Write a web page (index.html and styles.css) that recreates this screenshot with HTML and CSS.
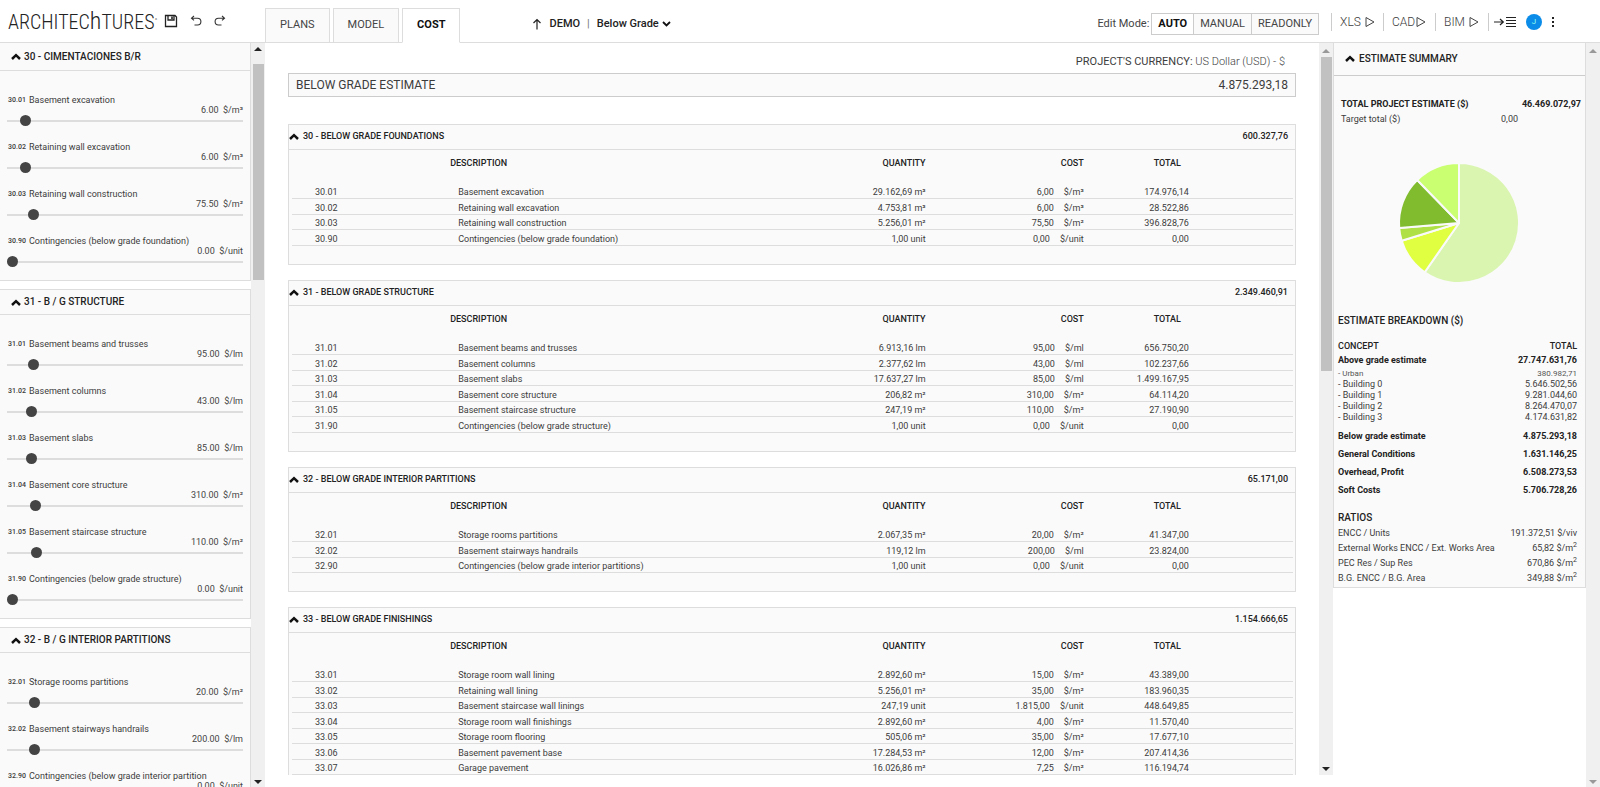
FILE: index.html
```html
<!DOCTYPE html>
<html lang="en">
<head>
<meta charset="utf-8">
<title>Architechtures - Cost</title>
<link rel="stylesheet" href="styles.css">
</head>
<body>
<svg class="defs" aria-hidden="true">
  <symbol id="caret" viewBox="0 0 10 7"><path d="M1 6 5 2.2 9 6" fill="none" stroke="#111" stroke-width="2.5"/></symbol>
  <symbol id="play" viewBox="0 0 10 12"><path d="M1 1.5 9 6 1 10.5Z" fill="none" stroke="#444" stroke-width="1"/></symbol>
  <symbol id="up" viewBox="0 0 8 4"><path d="M0 4 4 0 8 4Z"/></symbol>
  <symbol id="down" viewBox="0 0 8 4"><path d="M0 0 4 4 8 0Z"/></symbol>
</svg>
<header class="topbar">
  <div class="brand">
    <a class="logo" href="#">ARCHITEC<span class="logo-h">h</span>TURES<span class="logo-mark">°</span></a>
    <button class="icon-btn" aria-label="Save"><svg width="14" height="14" viewBox="0 0 14 14" fill="none" stroke="#222" stroke-width="1.3"><path d="M1.5 1.5H11L12.5 3V12.5H1.5Z"/><path d="M4 1.5V6H10V1.5"/><path d="M8 2.5V5" stroke-width="1.6"/></svg></button>
    <button class="icon-btn" aria-label="Undo"><svg width="12" height="12" viewBox="0 0 12 12" fill="none" stroke="#333" stroke-width="1.1"><path d="M4 1 1.5 3.2 4 5.4M1.5 3.2H7.5A3.3 3.3 0 0 1 7.5 10H4.5"/></svg></button>
    <button class="icon-btn" aria-label="Redo"><svg width="12" height="12" viewBox="0 0 12 12" fill="none" stroke="#333" stroke-width="1.1"><path d="M8 1 10.5 3.2 8 5.4M10.5 3.2H4.5A3.3 3.3 0 0 0 4.5 10H7.5"/></svg></button>
  </div>
  <nav class="tabs">
    <a class="tab" href="#">PLANS</a>
    <a class="tab" href="#">MODEL</a>
    <a class="tab tab-active" href="#" aria-current="page">COST</a>
  </nav>
  <div class="crumbs">
    <svg width="10" height="12" viewBox="0 0 10 12" fill="none" stroke="#222" stroke-width="1.2" aria-hidden="true"><path d="M5 11.5V1.5M1.5 5 5 1.5 8.500 5"/></svg>
    <a class="crumb" href="#">DEMO</a>
    <span class="bar">|</span>
    <select class="crumb-select" aria-label="Part"><option>Below Grade</option></select>
    <svg width="9" height="6" viewBox="0 0 9 6" fill="none" stroke="#111" stroke-width="1.8" aria-hidden="true"><path d="M1 1 4.500 4.500 8 1"/></svg>
  </div>
  <div class="mode">
    <span class="mode-label">Edit Mode:</span>
    <div class="mode-group">
      <button class="mode-btn mode-on">AUTO</button>
      <button class="mode-btn">MANUAL</button>
      <button class="mode-btn">READONLY</button>
    </div>
  </div>
  <div class="exports">
    <button class="export">XLS <svg width="10" height="12"><use href="#play"/></svg></button>
    <button class="export">CAD<svg width="10" height="12"><use href="#play"/></svg></button>
    <button class="export">BIM <svg width="10" height="12"><use href="#play"/></svg></button>
    <button class="export export-list" aria-label="Toggle summary"><svg width="22" height="12" viewBox="0 0 22 12" fill="none" stroke="#222" stroke-width="1.2"><path d="M0 6H9M6 3 9.300 6 6 9M12 1.500H22M12 4.500H22M12 7.500H22M12 10.500H22"/></svg></button>
    <button class="avatar">J</button>
    <button class="icon-btn" aria-label="More"><svg width="4" height="12" viewBox="0 0 4 12" fill="#222"><rect x="1" y="1" width="2" height="2"/><rect x="1" y="5" width="2" height="2"/><rect x="1" y="9" width="2" height="2"/></svg></button>
  </div>
</header>
<div class="workspace">
  <aside class="sidebar">
    <div class="side-list">
      <section class="side-card side-first">
        <button class="side-title"><svg width="10" height="7"><use href="#caret"/></svg>30 - CIMENTACIONES B/R</button>
        <div class="side-body">
          <div class="param"><label for="p1"><b>30.01</b>Basement excavation</label><output>6.00 &nbsp;$/m³</output><input id="p1" type="range" max="1000" value="58"></div>
          <div class="param"><label for="p2"><b>30.02</b>Retaining wall excavation</label><output>6.00 &nbsp;$/m³</output><input id="p2" type="range" max="1000" value="58"></div>
          <div class="param"><label for="p3"><b>30.03</b>Retaining wall construction</label><output>75.50 &nbsp;$/m²</output><input id="p3" type="range" max="1000" value="92"></div>
          <div class="param"><label for="p4"><b>30.90</b>Contingencies (below grade foundation)</label><output>0.00 &nbsp;$/unit</output><input id="p4" type="range" max="1000" value="0"></div>
        </div>
      </section>
      <section class="side-card">
        <button class="side-title"><svg width="10" height="7"><use href="#caret"/></svg>31 - B / G STRUCTURE</button>
        <div class="side-body">
          <div class="param"><label for="p5"><b>31.01</b>Basement beams and trusses</label><output>95.00 &nbsp;$/lm</output><input id="p5" type="range" max="1000" value="92"></div>
          <div class="param"><label for="p6"><b>31.02</b>Basement columns</label><output>43.00 &nbsp;$/lm</output><input id="p6" type="range" max="1000" value="83"></div>
          <div class="param"><label for="p7"><b>31.03</b>Basement slabs</label><output>85.00 &nbsp;$/lm</output><input id="p7" type="range" max="1000" value="83"></div>
          <div class="param"><label for="p8"><b>31.04</b>Basement core structure</label><output>310.00 &nbsp;$/m²</output><input id="p8" type="range" max="1000" value="101"></div>
          <div class="param"><label for="p9"><b>31.05</b>Basement staircase structure</label><output>110.00 &nbsp;$/m²</output><input id="p9" type="range" max="1000" value="107"></div>
          <div class="param"><label for="p10"><b>31.90</b>Contingencies (below grade structure)</label><output>0.00 &nbsp;$/unit</output><input id="p10" type="range" max="1000" value="0"></div>
        </div>
      </section>
      <section class="side-card">
        <button class="side-title"><svg width="10" height="7"><use href="#caret"/></svg>32 - B / G INTERIOR PARTITIONS</button>
        <div class="side-body">
          <div class="param"><label for="p11"><b>32.01</b>Storage rooms partitions</label><output>20.00 &nbsp;$/m²</output><input id="p11" type="range" max="1000" value="98"></div>
          <div class="param"><label for="p12"><b>32.02</b>Basement stairways handrails</label><output>200.00 &nbsp;$/lm</output><input id="p12" type="range" max="1000" value="98"></div>
          <div class="param"><label for="p13"><b>32.90</b>Contingencies (below grade interior partition</label><output>0.00 &nbsp;$/unit</output><input id="p13" type="range" max="1000" value="0"></div>
        </div>
      </section>
    </div>
    <div class="scroll scroll-side" aria-hidden="true"><svg width="8" height="4"><use href="#up"/></svg><div class="thumb"></div><svg class="end" width="8" height="4"><use href="#down"/></svg></div>
  </aside>
  <main class="main">
    <div class="estimate">
      <p class="currency"><span>PROJECT'S CURRENCY:</span> US Dollar (USD) - $</p>
      <h1 class="headline"><span>BELOW GRADE ESTIMATE</span><span>4.875.293,18</span></h1>
      <section class="card">
        <button class="card-title"><svg width="10" height="7"><use href="#caret"/></svg>30 - BELOW GRADE FOUNDATIONS<span class="sum">600.327,76</span></button>
        <table>
          <colgroup><col class="c-code"><col class="c-desc"><col class="c-qty"><col class="c-cost"><col class="c-total"><col></colgroup>
          <thead><tr><td></td><th>DESCRIPTION</th><th class="n">QUANTITY</th><th class="n">COST</th><th class="n">TOTAL</th><td></td></tr></thead>
          <tbody>
            <tr><td>30.01</td><td>Basement excavation</td><td>29.162,69 m³</td><td>6,00<i>$/m³</i></td><td>174.976,14</td><td></td></tr>
            <tr><td>30.02</td><td>Retaining wall excavation</td><td>4.753,81 m³</td><td>6,00<i>$/m³</i></td><td>28.522,86</td><td></td></tr>
            <tr><td>30.03</td><td>Retaining wall construction</td><td>5.256,01 m²</td><td>75,50<i>$/m²</i></td><td>396.828,76</td><td></td></tr>
            <tr><td>30.90</td><td>Contingencies (below grade foundation)</td><td>1,00 unit</td><td>0,00<i>$/unit</i></td><td>0,00</td><td></td></tr>
          </tbody>
        </table>
      </section>
      <section class="card">
        <button class="card-title"><svg width="10" height="7"><use href="#caret"/></svg>31 - BELOW GRADE STRUCTURE<span class="sum">2.349.460,91</span></button>
        <table>
          <colgroup><col class="c-code"><col class="c-desc"><col class="c-qty"><col class="c-cost"><col class="c-total"><col></colgroup>
          <thead><tr><td></td><th>DESCRIPTION</th><th class="n">QUANTITY</th><th class="n">COST</th><th class="n">TOTAL</th><td></td></tr></thead>
          <tbody>
            <tr><td>31.01</td><td>Basement beams and trusses</td><td>6.913,16 lm</td><td>95,00<i>$/ml</i></td><td>656.750,20</td><td></td></tr>
            <tr><td>31.02</td><td>Basement columns</td><td>2.377,62 lm</td><td>43,00<i>$/ml</i></td><td>102.237,66</td><td></td></tr>
            <tr><td>31.03</td><td>Basement slabs</td><td>17.637,27 lm</td><td>85,00<i>$/ml</i></td><td>1.499.167,95</td><td></td></tr>
            <tr><td>31.04</td><td>Basement core structure</td><td>206,82 m²</td><td>310,00<i>$/m²</i></td><td>64.114,20</td><td></td></tr>
            <tr><td>31.05</td><td>Basement staircase structure</td><td>247,19 m²</td><td>110,00<i>$/m²</i></td><td>27.190,90</td><td></td></tr>
            <tr><td>31.90</td><td>Contingencies (below grade structure)</td><td>1,00 unit</td><td>0,00<i>$/unit</i></td><td>0,00</td><td></td></tr>
          </tbody>
        </table>
      </section>
      <section class="card">
        <button class="card-title"><svg width="10" height="7"><use href="#caret"/></svg>32 - BELOW GRADE INTERIOR PARTITIONS<span class="sum">65.171,00</span></button>
        <table>
          <colgroup><col class="c-code"><col class="c-desc"><col class="c-qty"><col class="c-cost"><col class="c-total"><col></colgroup>
          <thead><tr><td></td><th>DESCRIPTION</th><th class="n">QUANTITY</th><th class="n">COST</th><th class="n">TOTAL</th><td></td></tr></thead>
          <tbody>
            <tr><td>32.01</td><td>Storage rooms partitions</td><td>2.067,35 m²</td><td>20,00<i>$/m²</i></td><td>41.347,00</td><td></td></tr>
            <tr><td>32.02</td><td>Basement stairways handrails</td><td>119,12 lm</td><td>200,00<i>$/ml</i></td><td>23.824,00</td><td></td></tr>
            <tr><td>32.90</td><td>Contingencies (below grade interior partitions)</td><td>1,00 unit</td><td>0,00<i>$/unit</i></td><td>0,00</td><td></td></tr>
          </tbody>
        </table>
      </section>
      <section class="card">
        <button class="card-title"><svg width="10" height="7"><use href="#caret"/></svg>33 - BELOW GRADE FINISHINGS<span class="sum">1.154.666,65</span></button>
        <table>
          <colgroup><col class="c-code"><col class="c-desc"><col class="c-qty"><col class="c-cost"><col class="c-total"><col></colgroup>
          <thead><tr><td></td><th>DESCRIPTION</th><th class="n">QUANTITY</th><th class="n">COST</th><th class="n">TOTAL</th><td></td></tr></thead>
          <tbody>
            <tr><td>33.01</td><td>Storage room wall lining</td><td>2.892,60 m²</td><td>15,00<i>$/m²</i></td><td>43.389,00</td><td></td></tr>
            <tr><td>33.02</td><td>Retaining wall lining</td><td>5.256,01 m²</td><td>35,00<i>$/m²</i></td><td>183.960,35</td><td></td></tr>
            <tr><td>33.03</td><td>Basement staircase wall linings</td><td>247,19 unit</td><td>1.815,00<i>$/unit</i></td><td>448.649,85</td><td></td></tr>
            <tr><td>33.04</td><td>Storage room wall finishings</td><td>2.892,60 m²</td><td>4,00<i>$/m²</i></td><td>11.570,40</td><td></td></tr>
            <tr><td>33.05</td><td>Storage room flooring</td><td>505,06 m²</td><td>35,00<i>$/m²</i></td><td>17.677,10</td><td></td></tr>
            <tr><td>33.06</td><td>Basement pavement base</td><td>17.284,53 m²</td><td>12,00<i>$/m²</i></td><td>207.414,36</td><td></td></tr>
            <tr><td>33.07</td><td>Garage pavement</td><td>16.026,86 m²</td><td>7,25<i>$/m²</i></td><td>116.194,74</td><td></td></tr>
          </tbody>
        </table>
      </section>
    </div>
    <div class="scroll scroll-main" aria-hidden="true"><svg class="dim" width="8" height="4"><use href="#up"/></svg><div class="thumb"></div><svg class="end" width="8" height="4"><use href="#down"/></svg></div>
  </main>
  <aside class="right">
    <section class="summary">
      <button class="summary-title"><svg width="10" height="7"><use href="#caret"/></svg>ESTIMATE SUMMARY</button>
      <dl class="totals">
        <div class="strong"><dt>TOTAL PROJECT ESTIMATE ($)</dt><dd>46.469.072,97</dd></div>
        <div class="target"><dt>Target total ($)</dt><dd>0,00</dd></div>
      </dl>
      <svg class="pie" width="124" height="124" viewBox="-62 -62 124 124" stroke="#fafafa" stroke-width="2" stroke-linejoin="round" role="img" aria-label="Estimate shares">
        <path fill="#daf5b0" d="M0 0V-60A60 60 0 1 1 -34.300 49.200Z"/>
        <path fill="#dfff40" d="M0 0L-34.300 49.200A60 60 0 0 1 -57.300 17.800Z"/>
        <path fill="#afe045" d="M0 0L-57.300 17.800A60 60 0 0 1 -59.800 4.900Z"/>
        <path fill="#80bc2e" d="M0 0L-59.800 4.900A60 60 0 0 1 -41.800 -43Z"/>
        <path fill="#c9ff70" d="M0 0L-41.800 -43A60 60 0 0 1 0 -60Z"/>
      </svg>
      <h2 class="sub">ESTIMATE BREAKDOWN ($)</h2>
      <dl class="breakdown">
        <div class="strong concept"><dt>CONCEPT</dt><dd>TOTAL</dd></div>
        <div class="strong above"><dt>Above grade estimate</dt><dd>27.747.631,76</dd></div>
        <div class="urban"><dt>- Urban</dt><dd>380.982,71</dd></div>
        <div class="item"><dt>- Building 0</dt><dd>5.646.502,56</dd></div>
        <div class="item"><dt>- Building 1</dt><dd>9.281.044,60</dd></div>
        <div class="item"><dt>- Building 2</dt><dd>8.264.470,07</dd></div>
        <div class="item"><dt>- Building 3</dt><dd>4.174.631,82</dd></div>
        <div class="strong group"><dt>Below grade estimate</dt><dd>4.875.293,18</dd></div>
        <div class="strong group"><dt>General Conditions</dt><dd>1.631.146,25</dd></div>
        <div class="strong group"><dt>Overhead, Profit</dt><dd>6.508.273,53</dd></div>
        <div class="strong group"><dt>Soft Costs</dt><dd>5.706.728,26</dd></div>
      </dl>
      <h2 class="sub sub-ratios">RATIOS</h2>
      <dl class="ratios">
        <div><dt>ENCC / Units</dt><dd>191.372,51 $/viv</dd></div>
        <div><dt>External Works ENCC / Ext. Works Area</dt><dd>65,82 $/m<sup>2</sup></dd></div>
        <div><dt>PEC Res / Sup Res</dt><dd>670,86 $/m<sup>2</sup></dd></div>
        <div><dt>B.G. ENCC / B.G. Area</dt><dd>349,88 $/m<sup>2</sup></dd></div>
      </dl>
    </section>
    <div class="scroll scroll-right" aria-hidden="true"><svg class="dim" width="8" height="4"><use href="#up"/></svg><svg class="dim end" width="8" height="4"><use href="#down"/></svg></div>
  </aside>
</div>
</body>
</html>
```
FILE: styles.css
```css
* { box-sizing: border-box; }
body {
  margin: 0;
  height: 100vh;
  display: flex;
  flex-direction: column;
  overflow: hidden;
  background: #fff;
  color: #3c3c3c;
  font: 400 9px/12px Roboto, "Liberation Sans", sans-serif;
}
button, select { font: inherit; color: inherit; background: none; border: 0; padding: 0; margin: 0; text-align: left; }
a { color: inherit; text-decoration: none; }
h1, h2, p, dl, dd { margin: 0; }
svg { flex: none; display: block; }
.defs { position: absolute; width: 0; height: 0; }

/* top bar */
.topbar { flex: none; height: 43px; display: flex; border-bottom: 1px solid #ddd; }
.brand { width: 265px; flex: none; display: flex; align-items: center; padding-left: 8px; gap: 12px; }
.logo { width: 144px; white-space: nowrap; font: 300 20px/24px "Roboto Condensed", "Liberation Sans Narrow", Roboto, sans-serif; color: #222; }
.logo-h { font-size: 24px; }
.logo-mark { font-size: 8px; vertical-align: top; }
.icon-btn { display: flex; }
.tabs { display: flex; align-items: flex-end; gap: 3px; margin-bottom: -1px; }
.tab { height: 35px; padding: 0 14px; border: 1px solid #ddd; background: #fafafa; font-size: 11px; line-height: 32px; color: #444; }
.tab-active { background: #fff; border-bottom-color: #fff; font-weight: 700; color: #111; }
.crumbs { display: flex; align-items: center; gap: 7px; padding: 6px 0 0 72px; font-size: 11px; font-weight: 500; color: #222; }
.bar { font-weight: 400; color: #777; }
.crumb-select { appearance: none; font-weight: 500; margin-right: -4px; }
.mode { margin-left: auto; display: flex; align-items: center; gap: 2px; padding-top: 6px; font-size: 11px; color: #444; }
.mode-group { display: flex; border: 1px solid #ccc; }
.mode-btn { height: 20px; padding: 0 6px; background: #fafafa; }
.mode-btn + .mode-btn { border-left: 1px solid #ccc; }
.mode-on { background: #fff; font-weight: 700; color: #111; }
.exports { display: flex; align-items: center; padding: 2px 45px 0 12px; }
.export { height: 18px; display: flex; align-items: center; gap: 4px; border-left: 1px solid #ccc; padding: 0 9px 0 8px; font-size: 12px; font-weight: 300; }
.export:first-child { padding-right: 8px; }
.export:nth-child(2) { gap: 1px; }
.export-list { padding: 0 10px 0 5px; }
.avatar { width: 16px; height: 16px; border-radius: 50%; background: #0a8ce8; color: #9fe; text-align: center; font-size: 8px; margin: 0 9px 0 0; }

/* shared scroll rails */
.workspace { flex: 1; min-height: 0; display: flex; }
.scroll { flex: none; width: 14px; background: #f0f0f0; display: flex; flex-direction: column; align-items: center; padding: 4px 0 3px; fill: #222; }
.scroll .dim { fill: #999; }
.scroll .end { margin-top: auto; }
.thumb { width: 11px; background: #c1c1c1; }

/* cost parameters */
.sidebar { flex: none; width: 265px; display: flex; overflow: hidden; }
.side-list { flex: 1; min-width: 0; }
.side-card { border: 1px solid #ddd; border-left: 0; background: #fafafa; margin-bottom: 8px; }
.side-first { border-top: 0; }
.side-title { display: flex; align-items: center; gap: 3px; width: 100%; height: 25px; padding-left: 11px; border-bottom: 1px solid #ddd; font-size: 10px; font-weight: 500; color: #222; }
.side-first .side-title { height: 28px; }
.side-body { padding: 15px 7px 6px; }
.param { display: grid; grid-template-columns: 100%; height: 47px; padding-top: 9px; line-height: 10px; grid-auto-rows: 10px; }
.param label { display: flex; white-space: nowrap; }
.param b { width: 22px; padding-left: 1px; font-size: 7px; font-weight: 500; }
.param output { text-align: right; color: #444; }
.param input { appearance: none; width: 100%; height: 11px; margin: 0; background: linear-gradient(#ddd, #ddd) center / 100% 2px no-repeat; }
.param input::-webkit-slider-thumb { appearance: none; width: 11px; height: 11px; border-radius: 50%; background: #444; }
.scroll-side .thumb { height: 216px; margin-top: 13px; }

/* estimate tables */
.main { flex: 1; min-width: 0; display: flex; overflow: hidden; margin-bottom: 12px; }
.estimate { flex: 1; min-width: 0; padding: 11px 23px 0; }
.currency { padding-right: 11px; text-align: right; font-size: 11px; line-height: 16px; font-weight: 300; }
.currency span { font-weight: 400; }
.headline { display: flex; justify-content: space-between; margin: 3px 0 27px; padding: 0 7px; border: 1px solid #ccc; background: #fafafa; font-size: 12px; line-height: 22px; font-weight: 400; }
.card { margin-bottom: 15px; padding-bottom: 18px; border: 1px solid #ddd; background: #fafafa; }
.card-title { display: flex; align-items: center; gap: 4px; width: 100%; height: 25px; padding: 0 7px 2px 0; border-bottom: 1px solid #ddd; font-weight: 500; color: #222; }
.sum { margin-left: auto; }
table { width: calc(100% - 5px); margin-left: 3px; table-layout: fixed; border-collapse: separate; border-spacing: 0; }
.c-code { width: 15.8%; }
.c-desc { width: 31.5%; }
.c-qty { width: 16%; }
.c-cost { width: 15.8%; }
.c-total { width: 10.5%; }
th, td { padding: 0; text-align: left; white-space: nowrap; }
thead tr { height: 34px; }
th { padding-bottom: 9px; font-weight: 500; color: #222; }
th.n { text-align: right; }
th.n:nth-child(5) { padding-right: 8px; }
tbody td { height: 15px; line-height: 12px; vertical-align: bottom; border-bottom: 1px solid #ddd; }
tbody tr:nth-child(even) td { height: 16px; }
tbody td:first-child { padding-left: 23px; }
tbody td:nth-child(2) { padding-left: 8px; }
tbody td:nth-child(n+3) { text-align: right; }
td i { font-style: normal; margin-left: 10px; }
.scroll-main { padding: 6px 0 4px; }
.scroll-main .thumb { height: 314px; margin-top: 4px; }

/* summary */
.right { flex: none; width: 267px; display: flex; align-items: flex-start; }
.summary { flex: 1; min-width: 0; border: 1px solid #ddd; border-top: 0; background: #fafafa; padding-bottom: 1px; }
.scroll-right { align-self: stretch; padding-top: 6px; }
.summary-title { display: flex; align-items: center; gap: 4px; width: 100%; height: 33px; padding: 0 0 1px 11px; border-bottom: 1px solid #ccc; font-size: 10px; font-weight: 500; color: #222; }
dl div { display: flex; justify-content: space-between; }
.strong { font-weight: 700; color: #222; }
.totals { padding: 21px 4px 0 7px; line-height: 15px; }
.target dd { margin-right: 63px; }
.pie { margin: 34px auto 28px 63px; }
.sub { padding-left: 4px; font-size: 10px; line-height: 15px; font-weight: 500; color: #222; }
.breakdown, .ratios { padding: 0 8px 0 4px; }
.concept { margin-top: 11px; font-weight: 500; line-height: 14px; }
.above { line-height: 14px; }
.urban { font-size: 8px; line-height: 11px; margin-top: 1px; color: #555; }
.item { line-height: 11px; }
.group { line-height: 18px; }
.item + .group { margin-top: 4px; }
.sub-ratios { margin-top: 11px; }
.ratios { padding-top: 1px; line-height: 15px; }
sup { font-size: 7px; line-height: 0; vertical-align: 4px; }
```
